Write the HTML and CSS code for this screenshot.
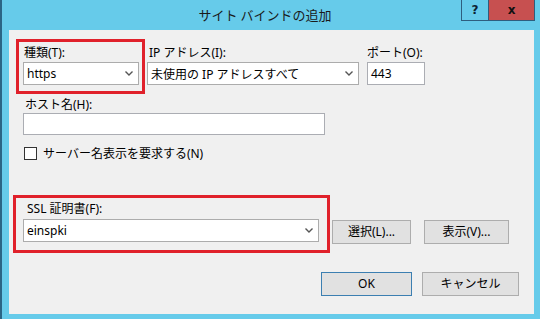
FILE: index.html
```html
<!DOCTYPE html>
<html lang="ja">
<head>
    <meta charset="UTF-8">
    <title>サイト バインドの追加</title>
    <link rel="stylesheet" href="styles.css">
</head>
<body>

    <div class="window">
        <div class="titlebar">
            <div class="title">サイト バインドの追加</div>
            <div class="caption-buttons">
                <div class="cap-help">?</div>
                <div class="cap-close">x</div>
            </div>
        </div>

        <div class="client">
            <div class="row-top">
                <div class="mark mark-type">
                    <div class="label">種類(T):</div>
                    <div class="combo combo-type">
                        <span>https</span>
                        <svg class="chev" width="8" height="5" viewBox="0 0 8 5"><polyline points="0.5,0.5 4,4 7.5,0.5" fill="none" stroke="#555" stroke-width="1.4"/></svg>
                    </div>
                </div>
                <div class="field field-ip">
                    <div class="label">IP アドレス(I):</div>
                    <div class="combo combo-ip">
                        <span>未使用の IP アドレスすべて</span>
                        <svg class="chev" width="8" height="5" viewBox="0 0 8 5"><polyline points="0.5,0.5 4,4 7.5,0.5" fill="none" stroke="#555" stroke-width="1.4"/></svg>
                    </div>
                </div>
                <div class="field field-port">
                    <div class="label">ポート(O):</div>
                    <div class="textbox textbox-port">443</div>
                </div>
            </div>

            <div class="field field-host">
                <div class="label">ホスト名(H):</div>
                <div class="textbox textbox-host"></div>
            </div>

            <div class="check-row">
                <div class="checkbox"></div>
                <span>サーバー名表示を要求する(N)</span>
            </div>

            <div class="row-ssl">
                <div class="mark mark-ssl">
                    <div class="label">SSL 証明書(F):</div>
                    <div class="combo combo-ssl">
                        <span>einspki</span>
                        <svg class="chev" width="8" height="5" viewBox="0 0 8 5"><polyline points="0.5,0.5 4,4 7.5,0.5" fill="none" stroke="#555" stroke-width="1.4"/></svg>
                    </div>
                </div>
                <div class="btn btn-select">選択(L)...</div>
                <div class="btn btn-view">表示(V)...</div>
            </div>

            <div class="row-footer">
                <div class="btn btn-ok">OK</div>
                <div class="btn btn-cancel">キャンセル</div>
            </div>
        </div>
    </div>

</body>
</html>
```

FILE: styles.css
```css
body {
    margin: 0;
    padding: 0;
    width: 540px;
    height: 319px;
    overflow: hidden;
    font-family: "Noto Sans", "Noto Sans CJK JP", sans-serif;
    font-size: 12px;
    color: #000;
}

.window {
    position: relative;
    width: 538px;
    height: 319px;
    background-color: #66CBEA;
    border-left: 2px solid #2B6585;
}

/* title bar */
.titlebar {
    height: 30px;
}

.title {
    padding-top: 6px;
    padding-right: 12px;
    text-align: center;
    font-family: "Noto Sans CJK JP", sans-serif;
    font-size: 13px;
    line-height: 18px;
    color: #1A1A1A;
}

.caption-buttons {
    position: absolute;
    top: 0;
    right: 5px;
    display: flex;
}

.cap-help {
    width: 26px;
    height: 20px;
    border: 1px solid #2E5E7E;
    border-top: none;
    border-right: none;
    text-align: center;
    font-family: "DejaVu Sans", sans-serif;
    font-weight: bold;
    font-size: 12px;
    line-height: 21px;
    color: #0C2233;
}

.cap-close {
    width: 45px;
    height: 20px;
    border: 1px solid #2E5E7E;
    border-top: none;
    background-color: #C75050;
    text-align: center;
    font-family: "DejaVu Sans", sans-serif;
    font-weight: bold;
    font-size: 12px;
    line-height: 21px;
    color: #111;
}

/* client area */
.client {
    margin-left: 7px;
    width: 525px;
    height: 284px;
    background-color: #F0F0F0;
    box-sizing: border-box;
    padding: 9px 0 0 7px;
}

.label {
    height: 15px;
    line-height: 15px;
    margin-bottom: 2px;
    white-space: nowrap;
}

.mark {
    border: 3px solid #E0212B;
}

.row-top {
    display: flex;
    align-items: flex-start;
}

.mark-type {
    padding: 3px 3px 6px 4px;
}

.mark-type .label {
    padding-left: 1px;
}

.combo {
    display: flex;
    align-items: center;
    justify-content: space-between;
    box-sizing: border-box;
    height: 23px;
    background-color: #fff;
    border: 1px solid #ACACAC;
    padding: 0 5px 0 3px;
    white-space: nowrap;
}

.chev {
    display: block;
}

.combo-type {
    width: 116px;
}

.field-ip {
    margin-left: 2px;
    margin-top: 6px;
}

.field-ip .label {
    padding-left: 2px;
}

.combo-ip {
    width: 212px;
}

.field-port {
    margin-left: 8px;
    margin-top: 6px;
}

.textbox {
    box-sizing: border-box;
    background-color: #fff;
    border: 1px solid #ABADB3;
    padding: 0 3px;
    line-height: 21px;
}

.textbox-port {
    width: 58px;
    height: 23px;
}

.field-host {
    margin-left: 7px;
    margin-top: 3px;
}

.field-host .label {
    padding-left: 2px;
    margin-bottom: 1px;
}

.textbox-host {
    width: 302px;
    height: 22px;
}

.check-row {
    display: flex;
    align-items: center;
    gap: 6px;
    margin-top: 11px;
    margin-left: 8px;
    height: 14px;
}

.checkbox {
    box-sizing: border-box;
    width: 13px;
    height: 13px;
    background-color: #fff;
    border: 1px solid #333;
}

.row-ssl {
    display: flex;
    align-items: flex-start;
    margin-top: 35px;
    margin-left: -3px;
}

.mark-ssl {
    padding: 3px 8px 8px 7px;
}

.mark-ssl .label {
    padding-left: 4px;
    margin-bottom: 3px;
}

.combo-ssl {
    width: 296px;
}

.btn {
    box-sizing: border-box;
    height: 24px;
    line-height: 22px;
    border: 1px solid #ADADAD;
    background-color: #E1E1E1;
    text-align: center;
    white-space: nowrap;
}

.btn-select {
    margin-top: 25px;
    margin-left: 2px;
    width: 79px;
}

.btn-view {
    margin-top: 25px;
    margin-left: 13px;
    width: 85px;
}

.row-footer {
    display: flex;
    justify-content: flex-end;
    gap: 10px;
    margin-top: 19px;
    padding-right: 15px;
}

.btn-ok {
    width: 91px;
    border-color: #3C7FB1;
}

.btn-cancel {
    width: 97px;
}
```
